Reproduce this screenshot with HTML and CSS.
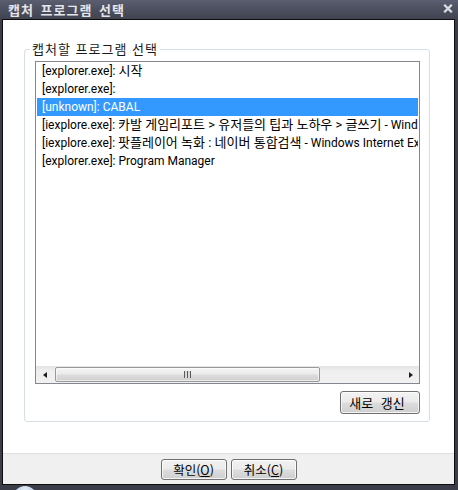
FILE: index.html
```html
<!DOCTYPE html>
<html lang="ko">
<head>
<meta charset="utf-8">
<title>캡처 프로그램 선택</title>
<link rel="stylesheet" href="styles.css">
</head>
<body>
<div class="window">
  <div class="titlebar">
    <span class="title">캡처 프로그램 선택</span>
    <svg class="close" width="10" height="9" viewBox="0 0 10 9"><path d="M1.2 0.8 L8.8 8.2 M8.8 0.8 L1.2 8.2" stroke="#dcdde2" stroke-width="2.3" fill="none"/></svg>
  </div>
  <div class="frame">
    <div class="client">
      <div class="content">
        <div class="group">
          <span class="group-label">캡처할 프로그램 선택</span>
          <div class="listbox">
            <ul class="items">
              <li>[explorer.exe]: <span class="ko">시작</span></li>
              <li>[explorer.exe]:</li>
              <li class="selected">[unknown]: CABAL</li>
              <li>[iexplore.exe]: <span class="ko">카발 게임리포트 &gt; 유저들의 팁과 노하우 &gt; 글쓰기</span> - Windows Internet Explorer</li>
              <li>[iexplore.exe]: <span class="ko">팟플레이어 녹화 : 네이버 통합검색</span> - Windows Internet Explorer</li>
              <li>[explorer.exe]: Program Manager</li>
            </ul>
            <div class="hscroll">
              <div class="sb-btn"><span class="arrow-left"></span></div>
              <div class="sb-track">
                <div class="sb-thumb"><span class="grip"></span></div>
              </div>
              <div class="sb-btn"><span class="arrow-right"></span></div>
            </div>
          </div>
          <div class="group-actions">
            <button class="btn btn-refresh">새로 갱신</button>
          </div>
        </div>
      </div>
      <div class="footer">
        <button class="btn btn-dlg">확인(<u>O</u>)</button>
        <button class="btn btn-dlg">취소(<u>C</u>)</button>
      </div>
    </div>
  </div>
  <div class="orb"></div>
</div>
</body>
</html>
```

FILE: styles.css
```css
* { box-sizing: border-box; }

html, body {
  margin: 0;
  padding: 0;
  background: #3b3e49;
}

body {
  font-family: "Roboto", "Noto Sans CJK KR", sans-serif;
  font-size: 12px;
  color: #000;
}

.window {
  position: relative;
  width: 458px;
  height: 490px;
  overflow: hidden;
  background: #3b3e49;
}

.titlebar {
  height: 19px;
  display: flex;
  align-items: center;
  justify-content: space-between;
  padding: 0 5px 0 8px;
  background: linear-gradient(to bottom, #5b5e70 0%, #4c4f5f 50%, #41434f 100%);
}

.title {
  font-family: "Noto Sans CJK KR", sans-serif;
  font-weight: bold;
  font-size: 13px;
  color: #e4e5ea;
  line-height: 19px;
  letter-spacing: 1px;
  word-spacing: 2px;
  margin-top: -1px;
}

.close {
  display: block;
  margin-top: -2px;
}

.frame {
  padding: 0 3px 5px 2px;
}

.client {
  height: 466px;
  border: 1px solid #0d0d10;
  background: #fff;
  display: flex;
  flex-direction: column;
}

.content {
  height: 433px;
  padding: 29px 24px 0 21px;
}

.group {
  position: relative;
  height: 373px;
  border: 1px solid #d5dfe5;
  border-radius: 3px;
  padding: 11px 9px 7px 10px;
}

.group-label {
  position: absolute;
  top: -10px;
  left: 5px;
  padding: 0 2px;
  background: #fff;
  font-family: "Noto Sans CJK KR", sans-serif;
  font-size: 13px;
  letter-spacing: 1px;
  line-height: 18px;
  color: #1a1a1a;
}

.listbox {
  height: 323px;
  border: 1px solid #828790;
  display: flex;
  flex-direction: column;
}

.items {
  flex: 1;
  list-style: none;
  margin: 0;
  padding: 0 1px;
  overflow: hidden;
  font-family: "Roboto", "Noto Sans CJK KR", sans-serif;
  font-size: 12px;
}

.items li {
  height: 18px;
  line-height: 18px;
  padding-left: 5px;
  white-space: nowrap;
  overflow: hidden;
  color: #000;
}

.items .ko {
  font-size: 13px;
}

.items li.selected {
  background: #3399ff;
  color: #fff;
}

.hscroll {
  height: 17px;
  display: flex;
  background: linear-gradient(to bottom, #e4e4e4 0%, #efefef 30%, #f1f1f1 100%);
}

.sb-btn {
  width: 17px;
  display: flex;
  align-items: center;
  justify-content: center;
}

.arrow-left {
  width: 0;
  height: 0;
  border-top: 3.5px solid transparent;
  border-bottom: 3.5px solid transparent;
  border-right: 4px solid #1f1f1f;
}

.arrow-right {
  width: 0;
  height: 0;
  border-top: 3.5px solid transparent;
  border-bottom: 3.5px solid transparent;
  border-left: 4px solid #1f1f1f;
}

.sb-track {
  flex: 1;
  padding: 1px 0 1px 2px;
}

.sb-thumb {
  width: 265px;
  height: 15px;
  border: 1px solid #999;
  border-radius: 2px;
  background: linear-gradient(to bottom, #f4f4f4 0%, #ececec 45%, #dcdcdc 55%, #cfcfcf 100%);
  box-shadow: inset 0 0 0 1px rgba(255,255,255,0.6);
  display: flex;
  align-items: center;
  justify-content: center;
}

.grip {
  width: 7px;
  height: 7px;
  background: repeating-linear-gradient(to right, #5b5b5b 0, #5b5b5b 1px, #d8d8d8 1px, #d8d8d8 3px);
}

.group-actions {
  display: flex;
  justify-content: flex-end;
  margin-top: 7px;
}

.btn {
  font-family: "Noto Sans CJK KR", sans-serif;
  font-size: 12.5px;
  color: #000;
  border: 1px solid #707070;
  border-radius: 3px;
  background: linear-gradient(to bottom, #f2f2f2 0%, #ebebeb 48%, #dddddd 52%, #cfcfcf 100%);
  box-shadow: inset 0 0 0 1px rgba(255,255,255,0.75);
  padding: 0;
  margin: 0;
  display: flex;
  align-items: center;
  justify-content: center;
}

.btn u {
  text-decoration: underline;
  text-underline-offset: 1px;
}

.btn-refresh {
  width: 80px;
  height: 23px;
  font-size: 13px;
  word-spacing: 4px;
  padding-right: 6px;
}

.footer {
  height: 31px;
  border-top: 1px solid #dfdfdf;
  background: #f0f0f0;
  display: flex;
  justify-content: center;
  align-items: flex-start;
  gap: 4px;
  padding-top: 5px;
}

.btn-dlg {
  width: 66px;
  height: 21px;
}

.orb {
  position: absolute;
  left: 13px;
  top: 486px;
  width: 24px;
  height: 24px;
  border-radius: 50%;
  background: radial-gradient(circle at 50% 20%, #e8f0fa 0%, #a9c0dc 60%, #6f8db5 100%);
}
```
